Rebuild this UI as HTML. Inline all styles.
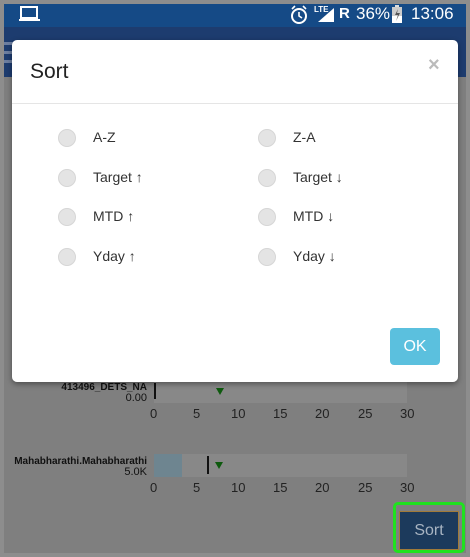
<!DOCTYPE html>
<html><head><style>
body{margin:0;width:470px;height:557px;background:#8d8d8d;position:relative;overflow:hidden;font-family:"Liberation Sans",Roboto,sans-serif}
.a{position:absolute}
.scr{left:4px;top:4px;width:462px;height:549px;background:#7e7e7e;overflow:hidden}
.rad{position:absolute;width:18px;height:18px;border-radius:50%;background:#e4e4e4;border:1px solid #d6d6d6;box-sizing:border-box}
.lbl{position:absolute;font-size:14px;color:#333}
.tick{position:absolute;font-size:13px;color:#222}
</style></head><body>
<div class="a scr">
 <div class="a" style="left:0;top:0;width:462px;height:23px;background:#154a86"></div>
 <div class="a" style="left:0;top:23px;width:462px;height:50px;background:#1d3c6f"></div>
 <div class="a" style="left:0;top:38px;width:20px;height:3px;background:#6c7ea0"></div>
 <div class="a" style="left:0;top:47px;width:20px;height:3px;background:#6c7ea0"></div>
 <div class="a" style="left:0;top:56px;width:20px;height:3px;background:#6c7ea0"></div>
 <div class="a" style="left:0;top:73px;width:462px;height:476px;background:#7f7f7f"></div>
</div>
<!-- status bar -->
<svg class="a" style="left:19px;top:6px" width="22" height="16"><rect x="2" y="1" width="16" height="11" fill="none" stroke="#fff" stroke-width="2"/><rect x="0" y="13" width="21" height="2" fill="#fff"/></svg>
<svg class="a" style="left:290px;top:5px" width="20" height="20"><circle cx="9" cy="11" r="7" fill="none" stroke="#fff" stroke-width="2"/><path d="M9 7v4l3 2M2 4l3-3M16 4l-3-3" stroke="#fff" stroke-width="1.6" fill="none"/></svg>
<div class="a" style="left:314px;top:5px;font-size:8px;color:#fff;font-weight:bold">LTE</div>
<svg class="a" style="left:318px;top:8px" width="16" height="14"><path d="M0 14L16 0V14Z" fill="#fff"/></svg>
<div class="a" style="left:339px;top:5px;font-size:15px;color:#fff;font-weight:bold">R</div>
<div class="a" style="left:356px;top:4px;font-size:17px;color:#fff">36%</div>
<svg class="a" style="left:392px;top:5px" width="10" height="18"><rect x="3" y="0" width="4" height="2" fill="#ddd"/><rect x="0" y="2" width="10" height="16" fill="#ccc"/><rect x="0" y="11" width="10" height="7" fill="#fff"/><path d="M6 4L3 10h3l-2 6 4-8H5z" fill="#555"/></svg>
<div class="a" style="left:411px;top:4px;font-size:17px;color:#fff">13:06</div>
<!-- chart -->
<div class="a" style="left:154px;top:375px;width:253px;height:28px;background:#888"></div>
<div class="a" style="left:0;top:382px;width:147px;text-align:right;font-size:10px;font-weight:bold;color:#111">413496_DETS_NA</div>
<div class="a" style="left:0;top:392px;width:147px;text-align:right;font-size:11px;color:#111">0.00</div>
<div class="a" style="left:154px;top:383px;width:2px;height:16px;background:#111"></div>
<div class="a" style="left:216px;top:388px;width:0;height:0;border-left:4px solid transparent;border-right:4px solid transparent;border-top:7px solid #0e5a0e"></div>
<div class="a" style="left:154px;top:454px;width:253px;height:23px;background:#888"></div>
<div class="a" style="left:154px;top:454px;width:28px;height:23px;background:#6e8590"></div>
<div class="a" style="left:0;top:456px;width:147px;text-align:right;font-size:10px;font-weight:bold;color:#111">Mahabharathi.Mahabharathi</div>
<div class="a" style="left:0;top:466px;width:147px;text-align:right;font-size:11px;color:#111">5.0K</div>
<div class="a" style="left:207px;top:456px;width:2px;height:18px;background:#111"></div>
<div class="a" style="left:215px;top:462px;width:0;height:0;border-left:4px solid transparent;border-right:4px solid transparent;border-top:7px solid #0e5a0e"></div>
<div class="tick" style="left:150px;top:406px">0</div><div class="tick" style="left:193px;top:406px">5</div><div class="tick" style="left:231px;top:406px">10</div><div class="tick" style="left:273px;top:406px">15</div><div class="tick" style="left:315px;top:406px">20</div><div class="tick" style="left:358px;top:406px">25</div><div class="tick" style="left:400px;top:406px">30</div>
<div class="tick" style="left:150px;top:480px">0</div><div class="tick" style="left:193px;top:480px">5</div><div class="tick" style="left:231px;top:480px">10</div><div class="tick" style="left:273px;top:480px">15</div><div class="tick" style="left:315px;top:480px">20</div><div class="tick" style="left:358px;top:480px">25</div><div class="tick" style="left:400px;top:480px">30</div>
<!-- sort button -->
<div class="a" style="left:393px;top:502px;border:3px solid #1fe21f;border-radius:5px;box-sizing:border-box;width:72px;height:51px"></div>
<div class="a" style="left:399px;top:511px;width:60px;height:39px;background:#1c3a5c;border:1px solid #a07a3a;box-sizing:border-box;color:#a8b4c2;font-size:16px;text-align:center;line-height:37px">Sort</div>
<!-- dialog -->
<div class="a" style="left:12px;top:40px;width:446px;height:342px;background:#fff;border-radius:5px;box-shadow:0 2px 6px rgba(0,0,0,.4)">
 <div class="a" style="left:18px;top:20px;font-size:21px;color:#222">Sort</div>
 <div class="a" style="left:416px;top:14px;font-size:20px;color:#bbb;font-weight:bold">×</div>
 <div class="a" style="left:0;top:63px;width:446px;height:1px;background:#e5e5e5"></div>
 <div class="rad" style="left:46px;top:89px"></div><div class="lbl" style="left:81px;top:89px">A-Z</div>
 <div class="rad" style="left:246px;top:89px"></div><div class="lbl" style="left:281px;top:89px">Z-A</div>
 <div class="rad" style="left:46px;top:129px"></div><div class="lbl" style="left:81px;top:129px">Target ↑</div>
 <div class="rad" style="left:246px;top:129px"></div><div class="lbl" style="left:281px;top:129px">Target ↓</div>
 <div class="rad" style="left:46px;top:168px"></div><div class="lbl" style="left:81px;top:168px">MTD ↑</div>
 <div class="rad" style="left:246px;top:168px"></div><div class="lbl" style="left:281px;top:168px">MTD ↓</div>
 <div class="rad" style="left:46px;top:208px"></div><div class="lbl" style="left:81px;top:208px">Yday ↑</div>
 <div class="rad" style="left:246px;top:208px"></div><div class="lbl" style="left:281px;top:208px">Yday ↓</div>
 <div class="a" style="left:378px;top:288px;width:50px;height:37px;background:#5bc0de;border-radius:4px;color:#fff;font-size:16px;text-align:center;line-height:37px">OK</div>
</div>
</body></html>
